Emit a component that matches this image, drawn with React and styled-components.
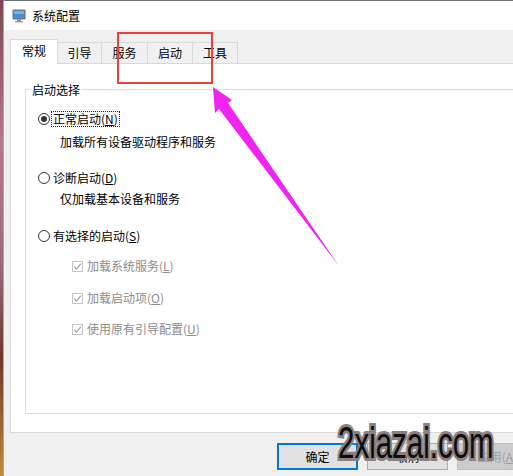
import React from 'react';
import styled, { createGlobalStyle } from 'styled-components';

const GlobalStyle = createGlobalStyle`
  html, body {
    margin: 0;
    padding: 0;
  }
  body {
    font-family: "Noto Sans CJK SC", "Noto Sans", sans-serif;
    font-size: 12px;
    color: #000;
  }
`;

const Screen = styled.div`
  position: relative;
  display: flex;
  align-items: flex-start;
  width: 513px;
  height: 476px;
  overflow: hidden;
  background: #5c2f2f;
`;

const DesktopStrip = styled.div`
  flex: none;
  align-self: stretch;
  width: 3px;
  background: linear-gradient(180deg, #7a4a52 0%, #b27a8a 30%, #9a6b7e 55%, #6a3a2c 75%, #c08a3a 100%);
`;

const Window = styled.div`
  flex: none;
  width: 560px;
  background: #f0f0f0;
  border-left: 1px solid #a8a8a8;
  border-top: 1px solid #707070;
`;

const TitleBar = styled.div`
  display: flex;
  align-items: center;
  gap: 6px;
  height: 29px;
  padding-left: 8px;
  background: #fff;
  font-size: 12px;
  line-height: 14px;
`;

const Body = styled.div`
  padding: 0 11px 0 6px;
`;

const TabStrip = styled.div`
  display: flex;
  align-items: flex-end;
  height: 33px;
`;

const Tab = styled.div`
  box-sizing: border-box;
  position: relative;
  flex: none;
  width: ${p => p.$w}px;
  height: ${p => (p.$active ? 25 : 21)}px;
  margin-bottom: ${p => (p.$active ? -1 : 0)}px;
  margin-left: ${p => (p.$first ? 0 : -1)}px;
  z-index: ${p => (p.$active ? 2 : 1)};
  display: flex;
  align-items: center;
  justify-content: center;
  padding-bottom: ${p => (p.$active ? 3 : 0)}px;
  border: 1px solid #d9d9d9;
  border-bottom: none;
  background: ${p => (p.$active ? '#fff' : '#f0f0f0')};
  font-size: 12px;
  line-height: 14px;
`;

const Panel = styled.div`
  position: relative;
  z-index: 1;
  background: #fff;
  border: 1px solid #d9d9d9;
  padding: 17px 0 18px 14px;
`;

const Group = styled.fieldset`
  margin: 0;
  min-inline-size: 0;
  padding: 12px 0 75px 5px;
  border: 1px solid #dcdcdc;
`;

const Legend = styled.legend`
  padding: 0 1px;
  font-size: 12px;
  line-height: 17px;
`;

const Row = styled.div`
  display: flex;
  align-items: center;
  height: 18px;
  margin-top: ${p => p.$mt || 0}px;
  margin-left: ${p => 7 + (p.$indent || 0)}px;
  font-size: 12px;
  line-height: 14px;
  color: ${p => (p.$disabled ? '#8c8c8c' : '#000')};
`;

const RadioDot = styled.span`
  box-sizing: border-box;
  flex: none;
  width: 12px;
  height: 12px;
  margin-right: 3px;
  border: 1px solid #333;
  border-radius: 50%;
  display: flex;
  align-items: center;
  justify-content: center;

  &::after {
    content: '';
    display: ${p => (p.$checked ? 'block' : 'none')};
    width: 6px;
    height: 6px;
    border-radius: 50%;
    background: #333;
  }
`;

const FocusLabel = styled.span`
  border: 1px dotted #222;
  padding: 0 1px;
  margin-left: -2px;
`;

const Box = styled.span`
  box-sizing: border-box;
  flex: none;
  width: 11px;
  height: 11px;
  margin-right: 4px;
  border: 1px solid #c4c4c4;
  display: flex;
  align-items: center;
  justify-content: center;
`;

const Key = styled.u`
  text-underline-offset: 1px;
`;

const Footer = styled.div`
  display: flex;
  justify-content: flex-end;
  gap: 9px;
  padding: 10px 15px 0 0;
  height: 42px;
`;

const Button = styled.div`
  box-sizing: border-box;
  flex: none;
  width: 81px;
  height: 27px;
  display: flex;
  align-items: center;
  justify-content: center;
  font-size: 12px;
  background: ${p => (p.$disabled ? '#cccccc' : '#e1e1e1')};
  border: ${p => (p.$default ? '2px solid #0078d7' : `1px solid ${p.$disabled ? '#bfbfbf' : '#adadad'}`)};
  color: ${p => (p.$disabled ? '#a0a0a0' : '#000')};
`;

const Highlight = styled.div`
  position: absolute;
  z-index: 5;
  left: 117px;
  top: 32px;
  width: 96px;
  height: 52px;
  box-sizing: border-box;
  border: 2px solid #e8403c;
  pointer-events: none;
`;

const Overlay = styled.svg`
  position: absolute;
  z-index: 5;
  left: 0;
  top: 0;
  pointer-events: none;
`;

const Watermark = styled.div`
  position: absolute;
  z-index: 6;
  left: 338px;
  top: 421px;
  font-family: "Liberation Sans", Arial, sans-serif;
  font-size: 44px;
  line-height: 44px;
  color: #0d0d0d;
  transform: scaleX(0.67);
  transform-origin: left top;
  -webkit-text-stroke: 6px #8a8080;
  paint-order: stroke fill;
  white-space: nowrap;
  pointer-events: none;
`;

const MonitorIcon = () => (
  <svg width="14" height="14" viewBox="0 0 14 14">
    <rect x="0.5" y="0.5" width="13" height="10" rx="1" fill="#6b7687" />
    <rect x="2" y="2" width="10" height="7" fill="#3d8fe4" />
    <rect x="2" y="2" width="10" height="3" fill="#6fb2f2" />
    <rect x="5" y="10.5" width="4" height="1.5" fill="#7d8794" />
    <rect x="3" y="12" width="8" height="1.5" fill="#9aa3ad" />
  </svg>
);

const Check = () => (
  <svg width="9" height="9" viewBox="0 0 9 9">
    <path d="M1 4.6 L3.5 7 L8 1.6" fill="none" stroke="#a6a6a6" strokeWidth="1.2" />
  </svg>
);

const tabs = [
  { label: '常规', w: 48, active: true },
  { label: '引导', w: 45 },
  { label: '服务', w: 47 },
  { label: '启动', w: 46 },
  { label: '工具', w: 46 },
];

const options = [
  { key: 'n', mt: 0, label: '正常启动', acc: 'N', checked: true, focus: true },
  { key: 'nd', mt: 5, desc: '加载所有设备驱动程序和服务' },
  { key: 'd', mt: 18, label: '诊断启动', acc: 'D' },
  { key: 'dd', mt: 3, desc: '仅加载基本设备和服务' },
  { key: 's', mt: 19, label: '有选择的启动', acc: 'S' },
];

const checks = [
  { key: 'l', mt: 12, label: '加载系统服务', acc: 'L' },
  { key: 'o', mt: 14, label: '加载启动项', acc: 'O' },
  { key: 'u', mt: 13, label: '使用原有引导配置', acc: 'U' },
];

export default function App() {
  return (
    <Screen>
      <GlobalStyle />
      <DesktopStrip />
      <Window>
        <TitleBar>
          <MonitorIcon />
          <span>系统配置</span>
        </TitleBar>
        <Body>
          <TabStrip>
            {tabs.map((t, i) => (
              <Tab key={t.label} $w={t.w} $active={t.active} $first={i === 0}>
                {t.label}
              </Tab>
            ))}
          </TabStrip>
          <Panel>
            <Group>
              <Legend>启动选择</Legend>
              {options.map(o =>
                o.desc ? (
                  <Row key={o.key} $mt={o.mt} $indent={22}>{o.desc}</Row>
                ) : (
                  <Row key={o.key} $mt={o.mt}>
                    <RadioDot $checked={o.checked} />
                    {o.focus ? (
                      <FocusLabel>{o.label}(<Key>{o.acc}</Key>)</FocusLabel>
                    ) : (
                      <span>{o.label}(<Key>{o.acc}</Key>)</span>
                    )}
                  </Row>
                )
              )}
              {checks.map(c => (
                <Row key={c.key} $mt={c.mt} $indent={34} $disabled>
                  <Box><Check /></Box>
                  <span>{c.label}(<Key>{c.acc}</Key>)</span>
                </Row>
              ))}
            </Group>
          </Panel>
          <Footer>
            <Button $default>确定</Button>
            <Button>取消</Button>
            <Button $disabled>应用(<Key>A</Key>)</Button>
          </Footer>
        </Body>
      </Window>
      <Highlight />
      <Overlay width="513" height="476" viewBox="0 0 513 476">
        <polygon
          points="213,87 232,100 228,103 339,266 219,109 215,113"
          fill="#f023f0"
        />
      </Overlay>
      <Watermark>2xiazai.com</Watermark>
    </Screen>
  );
}
